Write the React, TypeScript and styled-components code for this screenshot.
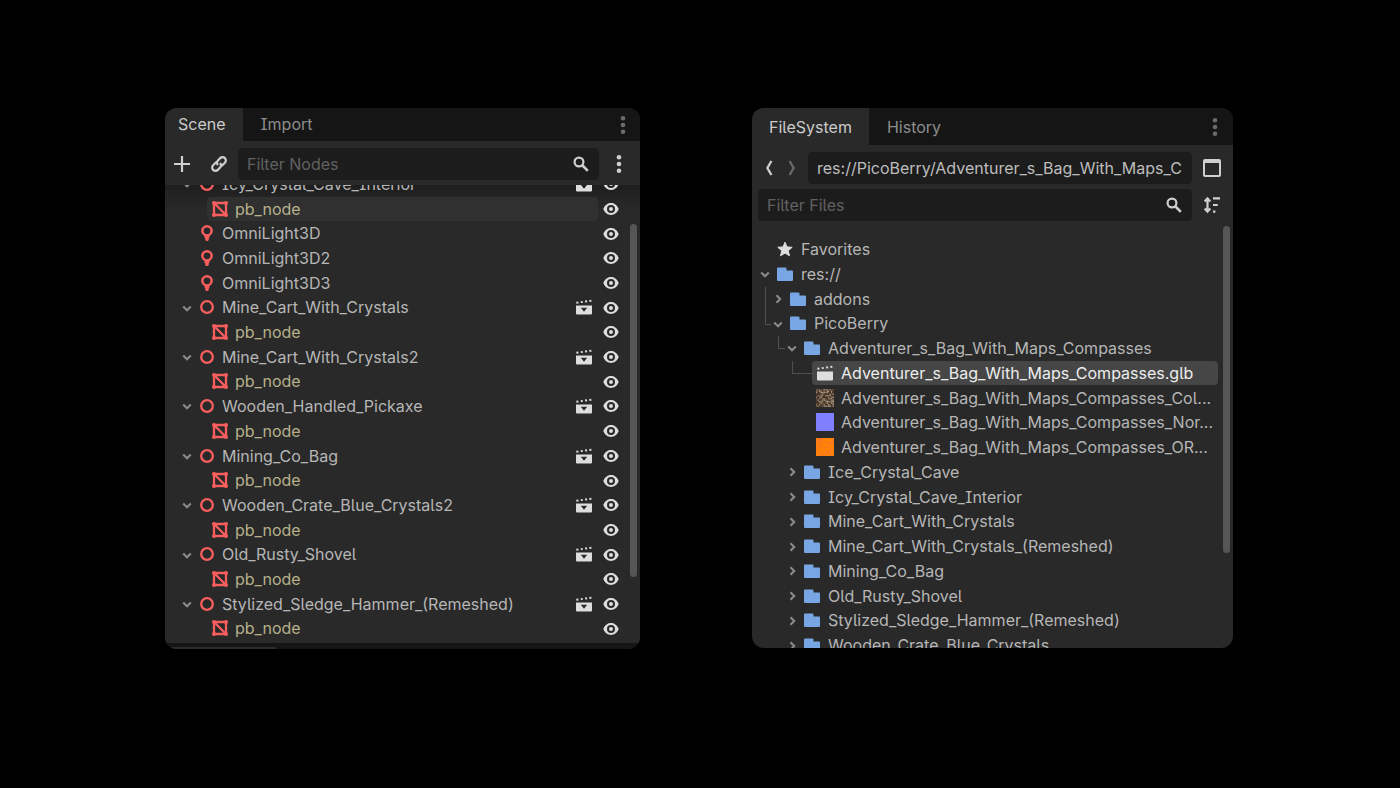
import React from "react";
import styled, { createGlobalStyle } from "styled-components";

const GlobalStyle = createGlobalStyle`
  * { box-sizing: border-box; }
  body {
    margin: 0;
    background: #000;
    color: #b6b6b6;
    font-family: Inter, "Noto Sans", sans-serif;
    font-size: 16px;
    line-height: 24px;
    font-feature-settings: "cv05", "cv08";
  }
  button, input { font: inherit; font-feature-settings: inherit; color: inherit; }
`;

const Page = styled.main`
  display: grid;
  grid-template-columns: 475fr 481fr;
  align-items: start;
  gap: 112px;
  min-height: 100vh;
  padding: 108px 167px 64px 165px;
`;

const Panel = styled.section`
  display: flex;
  flex-direction: column;
  min-width: 0;
  overflow: hidden;
  border-radius: 12px;
  background: #292929;
`;

const TabBar = styled.div<{ $height: number }>`
  display: flex;
  align-items: stretch;
  height: ${(p) => p.$height}px;
  background: #151515;
`;

const Tab = styled.button<{ $active?: boolean; $pad: string }>`
  border: 0;
  padding: ${(p) => p.$pad};
  background: ${(p) => (p.$active ? "#292929" : "transparent")};
  color: ${(p) => (p.$active ? "#cbcbcb" : "#8d8d8d")};
`;

const IconButton = styled.button<{ $width: number; $color?: string }>`
  display: flex;
  flex: none;
  align-items: center;
  justify-content: center;
  width: ${(p) => p.$width}px;
  padding: 0;
  border: 0;
  background: none;
  color: ${(p) => p.$color ?? "#cfcfcf"};
`;

const TabMenu = styled(IconButton)`
  margin-left: auto;
`;

const Toolbar = styled.div<{ $pad: string }>`
  display: flex;
  padding: ${(p) => p.$pad};
`;

const Field = styled.label`
  display: flex;
  flex: 1;
  align-items: center;
  min-width: 0;
  height: 32px;
  padding: 0 10px 0 9px;
  border-radius: 4px;
  background: #1c1c1c;
  color: #cfcfcf;
`;

const PathField = styled(Field)`
  margin-left: 4px;
`;

const TextInput = styled.input`
  flex: 1;
  min-width: 0;
  padding: 0;
  border: 0;
  outline: 0;
  background: none;
  color: #bdbdbd;
  &::placeholder { color: #616161; opacity: 1; }
`;

const View = styled.div<{ $height: number; $hint?: boolean }>`
  display: flex;
  align-items: flex-start;
  height: ${(p) => p.$height}px;
  overflow: hidden;
  background: ${(p) => (p.$hint ? "linear-gradient(#1e1e1e, #292929 24px)" : "none")};
`;

const Tree = styled.ul<{ $height: number; $offset: number; $left: number }>`
  display: grid;
  flex: 1;
  grid-auto-rows: 1fr;
  min-width: 0;
  min-height: ${(p) => p.$height}px;
  margin: ${(p) => p.$offset}px 0 0;
  padding: 0 0 0 ${(p) => p.$left}px;
  list-style: none;
`;

const Row = styled.li<{ $indent: number }>`
  display: flex;
  min-width: 0;
  min-height: 0;
  padding-left: ${(p) => p.$indent}px;
`;

const Guide = styled.span<{ $width: number; $elbow: boolean }>`
  width: ${(p) => p.$width}px;
  height: ${(p) => (p.$elbow ? "54%" : "100%")};
  border-left: 1px solid #505050;
  border-bottom: ${(p) => (p.$elbow ? "1px solid #505050" : "0")};
`;

const Item = styled.div<{ $bg?: string; $bright?: boolean }>`
  display: flex;
  flex: 1;
  align-items: center;
  min-width: 0;
  height: 24px;
  padding: 0 6px 0 4px;
  border-radius: 4px;
  background: ${(p) => p.$bg ?? "none"};
  color: ${(p) => (p.$bright ? "#ededed" : "inherit")};
`;

const IconCell = styled.span<{ $gap: number }>`
  display: flex;
  flex: none;
  justify-content: center;
  width: 18px;
  margin-right: ${(p) => p.$gap}px;
`;

const Label = styled.span<{ $warm?: boolean }>`
  flex: 1;
  overflow: hidden;
  white-space: nowrap;
  color: ${(p) => (p.$warm ? "#b6b08b" : "inherit")};
`;

const Toggle = styled(IconButton)`
  color: #8b8b8b;
`;

const Spacer = styled.span`
  flex: none;
  width: 14px;
`;

const Thumb = styled.div<{ $top: number; $height: number; $gap: number }>`
  flex: none;
  width: 7px;
  height: ${(p) => p.$height}px;
  margin: ${(p) => p.$top}px 3px 0 ${(p) => p.$gap}px;
  border-radius: 4px;
  background: #565656;
`;

const BottomBar = styled.div`
  display: flex;
  align-items: flex-end;
  height: 6px;
  background: #151515;
`;

const BottomThumb = styled.div`
  width: 111px;
  height: 2px;
  background: #2c2c2c;
`;

const Svg = ({ size = 16, children }: { size?: number; children: React.ReactNode }) => (
  <svg width={size} height={size} viewBox={`0 0 ${size} ${size}`} fill="none" aria-hidden="true">
    {children}
  </svg>
);

const Dots = () => (
  <Svg size={20}>
    <g fill="currentColor">
      <circle cx="10" cy="3.3" r="2.3" />
      <circle cx="10" cy="10" r="2.3" />
      <circle cx="10" cy="16.7" r="2.3" />
    </g>
  </Svg>
);

const Plus = () => (
  <Svg><path d="M8 0v16M0 8h16" stroke="currentColor" strokeWidth="2.2" /></Svg>
);

const LinkIcon = () => (
  <Svg size={18}>
    <g transform="rotate(-45 9 9)" stroke="currentColor" strokeWidth="2.2">
      <path d="M8.5 5.7H4a3.3 3.3 0 0 0 0 6.6h3.2a3.3 3.3 0 0 0 3.2-3.3" />
      <path d="M9.5 12.3H14a3.3 3.3 0 0 0 0-6.6h-3.2A3.3 3.3 0 0 0 7.6 9" />
    </g>
  </Svg>
);

const Search = () => (
  <Svg>
    <circle cx="6" cy="6" r="4.4" stroke="currentColor" strokeWidth="2.2" />
    <path d="M9 9l5.8 5.8" stroke="currentColor" strokeWidth="2.6" />
  </Svg>
);

const Caret = ({ open }: { open: boolean }) => (
  <Svg size={14}>
    <path d={open ? "M3.2 5.500L7 9.200l3.800-3.700" : "M5.500 3.200L9.200 7l-3.700 3.800"} stroke="currentColor" strokeWidth="2.1" />
  </Svg>
);

const Arrow = ({ back }: { back?: boolean }) => (
  <Svg><path d={back ? "M10.4 1L6.4 8l4 7" : "M5.6 1l4 7-4 7"} stroke="currentColor" strokeWidth="2.3" /></Svg>
);

const WindowIcon = () => (
  <Svg size={18}>
    <rect x="1" y="1" width="16" height="16" rx="1" stroke="currentColor" strokeWidth="2" />
    <path d="M1 2.5h16" stroke="currentColor" strokeWidth="3" />
  </Svg>
);

const Sort = () => (
  <Svg>
    <path d="M3.5 3v10M0.7 4.4l2.8-3 2.8 3M0.7 11.6l2.8 3 2.8-3" stroke="currentColor" strokeWidth="2.2" />
    <path d="M9 1.4h7M9 8h4.8M9 14.6h2.4" stroke="currentColor" strokeWidth="2.2" />
  </Svg>
);

const Eye = () => (
  <Svg>
    <path
      fill="#dedede"
      fillRule="evenodd"
      d="M8 2C5.2 2 1.800 4 .4 7.700a1 1 0 0 0 0 .6C1.800 12.200 5.200 14 8 14s6.200-1.800 7.600-5.700a1 1 0 0 0 0-.6C14.200 4 10.800 2 8 2zm0 2a4 4 0 0 1 0 8 4 4 0 0 1 0-8zm0 2a2 2 0 0 0 0 4 2 2 0 0 0 0-4z"
    />
  </Svg>
);

const Clapper = ({ menu }: { menu?: boolean }) => (
  <Svg>
    <path
      fill="#dedede"
      fillRule="evenodd"
      d={"M0 6.500h16V14.500a1 1 0 0 1-1 1H1a1 1 0 0 1-1-1z" + (menu ? "M4.800 8.700h6.400L8 12.800z" : "")}
    />
    <path
      fill="#dedede"
      d="M.2 2.800l2-.3.4 1.900-2.100.4zM4.600 2.200l1.900-.3.5 1.900-2 .3zM8.900 1.600l1.900-.3.500 1.900-2 .3zM13.200 1l2-.3.300 2-1.900.3z"
    />
  </Svg>
);

const Node3D = () => (
  <Svg><circle cx="8" cy="8" r="5.8" stroke="#f95e5e" strokeWidth="2.3" /></Svg>
);

const Mesh = () => (
  <Svg>
    <path d="M2 2h12v12H2zL14 14" stroke="#f95e5e" strokeWidth="2.3" />
    <g fill="#f95e5e">
      <circle cx="2" cy="2" r="2" />
      <circle cx="14" cy="2" r="2" />
      <circle cx="2" cy="14" r="2" />
      <circle cx="14" cy="14" r="2" />
    </g>
  </Svg>
);

const Light = () => (
  <Svg>
    <path
      fill="#f95e5e"
      fillRule="evenodd"
      d="M8 0a5.900 5.900 0 0 0-5.900 5.800c0 2.300 1.300 4 3.400 5.200V13h5v-2c2.100-1.200 3.400-2.900 3.400-5.200A5.900 5.900 0 0 0 8 0zm0 2.400a3.400 3.400 0 1 1 0 6.800 3.400 3.400 0 0 1 0-6.800zM6.200 13h3.600v2L8.800 16H7.200l-1-1z"
    />
  </Svg>
);

const Folder = () => (
  <Svg>
    <path fill="#78a5e3" d="M1 1.500h7.500a1 1 0 0 1 1 1V4.500H15a1 1 0 0 1 1 1V14a1 1 0 0 1-1 1H1a1 1 0 0 1-1-1V2.500a1 1 0 0 1 1-1z" />
  </Svg>
);

const Star = () => (
  <Svg>
    <path
      fill="#dedede"
      stroke="#dedede"
      strokeLinejoin="round"
      d="M8 1.200l2 4.700 5.200.4-4 3.400 1.300 5.100L8 12.100l-4.500 2.700 1.300-5.100-4-3.400L6 5.900z"
    />
  </Svg>
);

const Texture = ({ colors, seed }: { colors: string[]; seed: number }) => {
  let state = seed;
  const cells = Array.from({ length: colors.length > 1 ? 144 : 0 }, (_, i) => {
    state = (state * 16807) % 2147483647;
    const color = colors[Math.floor(state / 1024) % colors.length];
    return <rect key={i} x={(i % 12) * 1.5} y={Math.floor(i / 12) * 1.5} width="1.5" height="1.5" fill={color} />;
  });
  return (
    <Svg size={18}>
      <rect width="18" height="18" fill={colors[0]} />
      {cells}
    </Svg>
  );
};

type SceneNode = { name: string; kind: "node" | "mesh" | "light"; selected?: boolean };

const instance = (name: string, selected = false): SceneNode[] => [
  { name, kind: "node" },
  { name: "pb_node", kind: "mesh", selected },
];

const sceneNodes: SceneNode[] = [
  ...instance("Icy_Crystal_Cave_Interior", true),
  { name: "OmniLight3D", kind: "light" },
  { name: "OmniLight3D2", kind: "light" },
  { name: "OmniLight3D3", kind: "light" },
  ...instance("Mine_Cart_With_Crystals"),
  ...instance("Mine_Cart_With_Crystals2"),
  ...instance("Wooden_Handled_Pickaxe"),
  ...instance("Mining_Co_Bag"),
  ...instance("Wooden_Crate_Blue_Crystals2"),
  ...instance("Old_Rusty_Shovel"),
  ...instance("Stylized_Sledge_Hammer_(Remeshed)"),
];

const sceneIcons = { node: <Node3D />, mesh: <Mesh />, light: <Light /> };

const SceneRow = ({ name, kind, selected }: SceneNode) => (
  <Row $indent={kind === "mesh" ? 13 : 0}>
    {kind === "node" ? (
      <Toggle $width={14} aria-label={`Collapse ${name}`}><Caret open /></Toggle>
    ) : (
      <Spacer />
    )}
    <Item $bg={selected ? "#303030" : undefined}>
      <IconCell $gap={6}>{sceneIcons[kind]}</IconCell>
      <Label $warm={kind === "mesh"}>{name}</Label>
      {kind === "node" && <IconButton $width={16} aria-label="Open scene"><Clapper menu /></IconButton>}
    </Item>
    <IconButton $width={26} aria-label={`Toggle visibility of ${name}`}><Eye /></IconButton>
  </Row>
);

type FileEntry = {
  name: string;
  level: number;
  icon?: React.ReactNode;
  open?: boolean;
  leaf?: boolean;
  guide?: "line" | "elbow";
  selected?: boolean;
};

const files: FileEntry[] = [
  { name: "Favorites", level: 0, icon: <Star />, leaf: true },
  { name: "res://", level: 0, open: true },
  { name: "addons", level: 1, guide: "line" },
  { name: "PicoBerry", level: 1, open: true, guide: "elbow" },
  { name: "Adventurer_s_Bag_With_Maps_Compasses", level: 2, open: true, guide: "elbow" },
  { name: "Adventurer_s_Bag_With_Maps_Compasses.glb", level: 3, icon: <Clapper />, leaf: true, guide: "elbow", selected: true },
  {
    name: "Adventurer_s_Bag_With_Maps_Compasses_Col...",
    level: 3,
    leaf: true,
    icon: <Texture seed={7177} colors={["#4d3e31", "#87705a", "#3a2e26", "#a38d74", "#66503d", "#8f7a62"]} />,
  },
  { name: "Adventurer_s_Bag_With_Maps_Compasses_Nor...", level: 3, leaf: true, icon: <Texture seed={1} colors={["#8080ff"]} /> },
  {
    name: "Adventurer_s_Bag_With_Maps_Compasses_OR...",
    level: 3,
    leaf: true,
    icon: <Texture seed={2931} colors={["#ff8008", "#ff8a00", "#fb7620", "#ff8400", "#f6703a"]} />,
  },
  { name: "Ice_Crystal_Cave", level: 2 },
  { name: "Icy_Crystal_Cave_Interior", level: 2 },
  { name: "Mine_Cart_With_Crystals", level: 2 },
  { name: "Mine_Cart_With_Crystals_(Remeshed)", level: 2 },
  { name: "Mining_Co_Bag", level: 2 },
  { name: "Old_Rusty_Shovel", level: 2 },
  { name: "Stylized_Sledge_Hammer_(Remeshed)", level: 2 },
  { name: "Wooden_Crate_Blue_Crystals", level: 2 },
];

const indents = [0, 13, 27, 40];

const FileRow = ({ name, level, icon, open, leaf, guide, selected }: FileEntry) => {
  const full = indents[level];
  const guideStart = guide ? indents[level - 1] + 7 : full;
  const guideWidth = full - guideStart + (leaf ? 14 : 0);
  return (
    <Row $indent={guideStart}>
      {guide && <Guide $width={guideWidth} $elbow={guide === "elbow"} />}
      {leaf ? (
        !guide && <Spacer />
      ) : (
        <Toggle $width={14} aria-label={`${open ? "Collapse" : "Expand"} ${name}`}><Caret open={!!open} /></Toggle>
      )}
      <Item $bg={selected ? "#464646" : undefined} $bright={selected}>
        <IconCell $gap={7}>{icon ?? <Folder />}</IconCell>
        <Label>{name}</Label>
      </Item>
    </Row>
  );
};

export default function App() {
  return (
    <>
      <GlobalStyle />
      <Page>
        <Panel aria-label="Scene">
          <TabBar $height={33}>
            <Tab $active $pad="0 17px 2px 13px">Scene</Tab>
            <Tab $pad="0 18px 2px">Import</Tab>
            <TabMenu $width={35} $color="#6b6b6b" aria-label="Dock options"><Dots /></TabMenu>
          </TabBar>
          <Toolbar $pad="7px 1px 5px 0">
            <IconButton $width={34} aria-label="Add node"><Plus /></IconButton>
            <IconButton $width={39} aria-label="Instantiate scene"><LinkIcon /></IconButton>
            <Field>
              <TextInput placeholder="Filter Nodes" aria-label="Filter Nodes" />
              <Search />
            </Field>
            <IconButton $width={40} aria-label="Scene options"><Dots /></IconButton>
          </Toolbar>
          <View $height={458} $hint>
            <Tree $height={469} $offset={-13} $left={15}>
              {sceneNodes.map((node, i) => <SceneRow key={i} {...node} />)}
            </Tree>
            <Thumb $top={39} $height={353} $gap={6} />
          </View>
          <BottomBar><BottomThumb /></BottomBar>
        </Panel>

        <Panel aria-label="FileSystem">
          <TabBar $height={37}>
            <Tab $active $pad="0 17px">FileSystem</Tab>
            <Tab $pad="0 18px">History</Tab>
            <TabMenu $width={36} $color="#6b6b6b" aria-label="Dock options"><Dots /></TabMenu>
          </TabBar>
          <Toolbar $pad="7px 1px 5px 6px">
            <IconButton $width={22} aria-label="Back"><Arrow back /></IconButton>
            <IconButton $width={24} $color="#6b6b6b" aria-label="Forward"><Arrow /></IconButton>
            <PathField>
              <TextInput defaultValue="res://PicoBerry/Adventurer_s_Bag_With_Maps_C" aria-label="Path" />
            </PathField>
            <IconButton $width={40} aria-label="Split view"><WindowIcon /></IconButton>
          </Toolbar>
          <Toolbar $pad="0 1px 1px 6px">
            <Field>
              <TextInput placeholder="Filter Files" aria-label="Filter Files" />
              <Search />
            </Field>
            <IconButton $width={40} aria-label="Sort files"><Sort /></IconButton>
          </Toolbar>
          <View $height={426}>
            <Tree $height={421} $offset={15} $left={6}>
              {files.map((file) => <FileRow key={file.name} {...file} />)}
            </Tree>
            <Thumb $top={4} $height={327} $gap={5} />
          </View>
        </Panel>
      </Page>
    </>
  );
}
